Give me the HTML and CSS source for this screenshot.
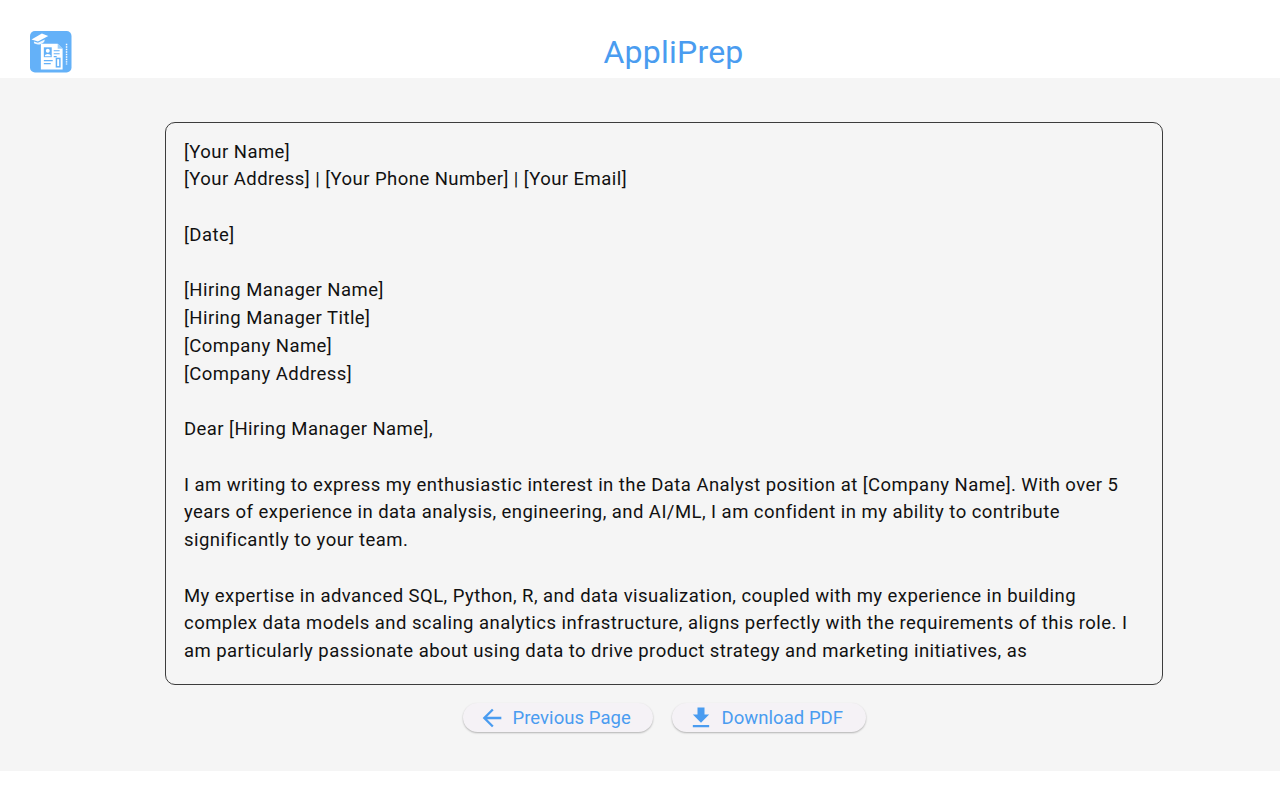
FILE: index.html
```html
<!DOCTYPE html>
<html lang="en">
<head>
<meta charset="utf-8">
<title>AppliPrep</title>
<link rel="stylesheet" href="styles.css">
</head>
<body>
<header class="header">
  <svg class="logo" viewBox="0 0 42 42" width="41.500" height="41.500" aria-hidden="true">
    <rect width="42" height="42" rx="5" fill="#64b1f8"/>
    <path d="M1.500 8.500 L12 2.500 L18.500 5 L8 10.500 Z" fill="#fff"/>
    <path d="M4 10.500 L8 12 L15 8.500 L14.500 10.500 C12 14 7 14.500 4 12.500 Z" fill="#eef7ff"/>
    <path d="M11 13 H28 L33 18 V39 H11 Z" fill="#fff"/>
    <path d="M28 13 V18 H33 Z" fill="#9ccffb"/>
    <rect x="14" y="16.500" width="8" height="10" fill="#64b1f8"/>
    <circle cx="18" cy="20" r="2" fill="#fff"/>
    <path d="M15 25.500 C15 22.500 21 22.500 21 25.500 Z" fill="#fff"/>
    <path d="M24 20 H30 M24 23 H30 M24 26 H27 M14 30 H23 M14 33 H21" stroke="#64b1f8" stroke-width="1.200"/>
    <rect x="26" y="27" width="5" height="10" fill="#64b1f8"/>
    <rect x="27.500" y="28.500" width="2" height="7" fill="#fff"/>
    <path d="M37 13 V34" stroke="#fff" stroke-width="1.500" stroke-dasharray="1.500 1"/>
  </svg>
  <h1 class="title">AppliPrep</h1>
</header>
<main class="main">
  <div class="letter">
    <p class="letter-text">[Your Name]
[Your Address] | [Your Phone Number] | [Your Email]

[Date]

[Hiring Manager Name]
[Hiring Manager Title]
[Company Name]
[Company Address]

Dear [Hiring Manager Name],

I am writing to express my enthusiastic interest in the Data Analyst position at [Company Name]. With over 5 years of experience in data analysis, engineering, and AI/ML, I am confident in my ability to contribute significantly to your team.

My expertise in advanced SQL, Python, R, and data visualization, coupled with my experience in building complex data models and scaling analytics infrastructure, aligns perfectly with the requirements of this role. I am particularly passionate about using data to drive product strategy and marketing initiatives, as</p>
  </div>
  <div class="actions">
    <button class="btn btn-prev" type="button">
      <svg class="icon" viewBox="0 0 24 24" width="28" height="28" aria-hidden="true"><path d="M20 11H7.830l5.590-5.590L12 4l-8 8 8 8 1.410-1.410L7.830 13H20v-2z"/></svg>
      <span>Previous Page</span>
    </button>
    <button class="btn btn-pdf" type="button">
      <svg class="icon" viewBox="0 0 24 24" width="28" height="28" aria-hidden="true"><path d="M19 9h-4V3H9v6H5l7 7 7-7zM5 18v2h14v-2H5z"/></svg>
      <span>Download PDF</span>
    </button>
  </div>
</main>
</body>
</html>
```
FILE: styles.css
```css
* { box-sizing: border-box; }
html, body { margin: 0; padding: 0; background: #fff; }
body { font-family: Roboto, "Liberation Sans", sans-serif; height: 800px; overflow: hidden; }
.header { position: relative; height: 78px; display: flex; align-items: flex-end; justify-content: center; padding: 0 0 2px 67px; background: #fff; }
.logo { position: absolute; left: 30px; top: 31px; }
.title { margin: 0; font-size: 32px; font-weight: 400; line-height: 48px; color: #4a9cf0; letter-spacing: 0.23px; }
.main { height: 693px; background: #f5f5f5; display: flex; flex-direction: column; align-items: center; padding: 44px 0 0 48px; }
.letter { width: 998px; height: 562.500px; border: 1px solid #3c3c3c; border-radius: 10px; padding: 15.700px 18px 0; overflow: hidden; }
.letter-text { margin: 0; white-space: pre-wrap; font-size: 18.500px; line-height: 27.750px; letter-spacing: 0.450px; color: #111; }
.actions { display: flex; gap: 19px; margin-top: 18.500px; }
.btn { display: flex; align-items: center; gap: 7px; height: 29px; border: 0; padding: 0; border-radius: 15px; background: #f5f2f6; box-shadow: 0 1px 2px rgba(0,0,0,.28); font: inherit; font-size: 18.500px; letter-spacing: 0.05px; color: #4a9cf0; }
.btn-prev { width: 190px; padding-left: 15px; }
.btn-pdf { width: 194px; padding-left: 15px; }
.icon { fill: #4a9cf0; flex: none; }
```
